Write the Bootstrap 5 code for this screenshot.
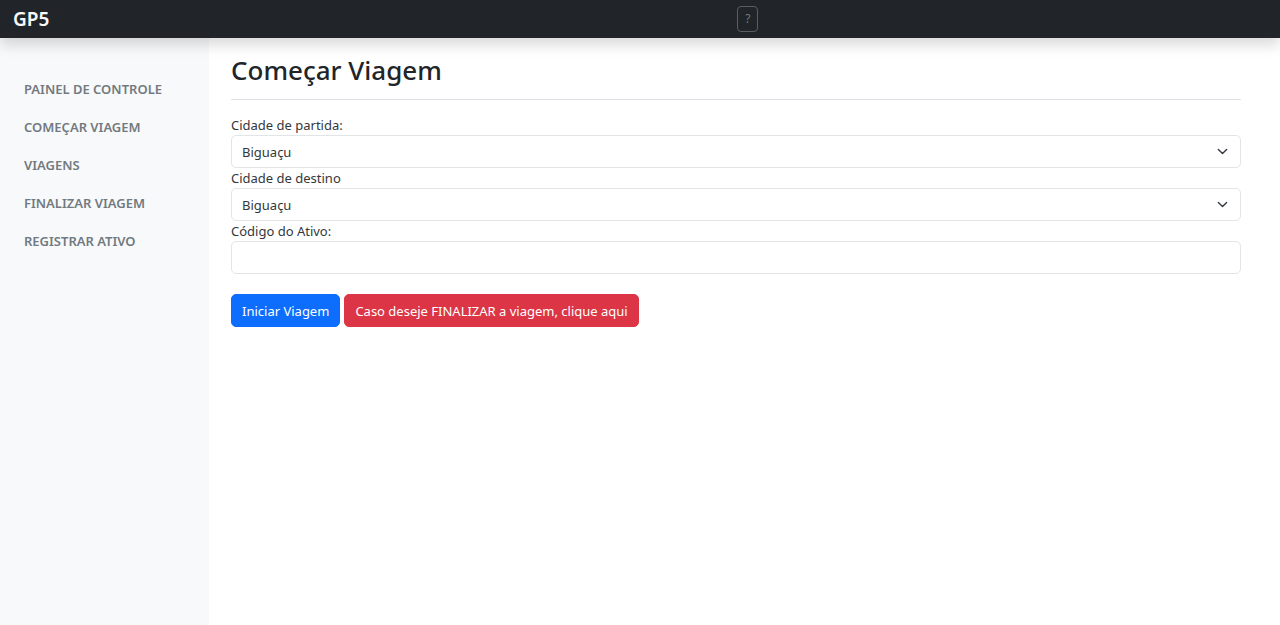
<!DOCTYPE html>
<html lang="pt-br">
<head>
<meta charset="utf-8">
<meta name="viewport" content="width=device-width, initial-scale=1">
<title>GP5 - Começar Viagem</title>
<link href="https://cdn.jsdelivr.net/npm/bootstrap@5.3.0/dist/css/bootstrap.min.css" rel="stylesheet">
<style>
  body { font-family: "Noto Sans", "Open Sans", sans-serif; font-size: 13px; line-height: 20px; }
  .topbar { height: 38px; box-shadow: 0 7px 14px rgba(0, 0, 0, .15); z-index: 10; }
  .brand-cell { width: 57.6%; padding-left: 13px; }
  .topbar .navbar-brand { font-size: 19px; font-weight: 600; line-height: 26px; }
  .help-btn { width: 21px; height: 26px; border: 1px solid #5a5e62; border-radius: 4px; background: transparent; color: #73777b; font-size: 12px; line-height: 24px; }
  .sidebar { flex: 0 0 209px; padding-top: 32px; }
  .sidebar .nav-link { padding: 9px 24px; color: #727980; font-size: 13px; font-weight: 600; line-height: 20px; text-transform: uppercase; }
  .content-area { padding: 16px 39px 16px 22px; }
  h1.page-title { font-size: 26px; font-weight: 500; line-height: 32px; }
  .title-rule { border-bottom: 1px solid #dee2e6; padding-bottom: 13px; margin-bottom: 15px; }
  .form-select, .form-control { height: 33px; padding-top: 6px; padding-bottom: 4px; padding-left: 10px; border-color: #e2e5e8; border-radius: 5px; font-size: 13px; line-height: 21px; }
  .form-select { background-size: 13px 11px; background-position: right 11px center; }
  label, .form-select { color: #33373b; }
  .btn { padding: 6px 10px 4px; border-radius: 5px; font-size: 13px; line-height: 21px; }
</style>
</head>
<body class="d-flex flex-column min-vh-100">
<header class="navbar topbar bg-dark p-0 sticky-top justify-content-start" data-bs-theme="dark">
  <div class="brand-cell"><a class="navbar-brand p-0 m-0" href="#">GP5</a></div>
  <button class="help-btn p-0" type="button">?</button>
</header>
<div class="d-flex flex-grow-1">
  <nav class="sidebar bg-light">
    <ul class="nav flex-column">
      <li class="nav-item"><a class="nav-link" href="#">Painel de controle</a></li>
      <li class="nav-item"><a class="nav-link" href="#">Começar viagem</a></li>
      <li class="nav-item"><a class="nav-link" href="#">Viagens</a></li>
      <li class="nav-item"><a class="nav-link" href="#">Finalizar viagem</a></li>
      <li class="nav-item"><a class="nav-link" href="#">Registrar ativo</a></li>
    </ul>
  </nav>
  <main class="content-area flex-grow-1">
    <div class="title-rule"><h1 class="page-title m-0">Começar Viagem</h1></div>
    <form>
      <label class="d-block" for="partida">Cidade de partida:</label>
      <select class="form-select" id="partida"><option>Biguaçu</option></select>
      <label class="d-block" for="destino">Cidade de destino</label>
      <select class="form-select" id="destino"><option>Biguaçu</option></select>
      <label class="d-block" for="ativo">Código do Ativo:</label>
      <input class="form-control" type="text" id="ativo">
      <div class="d-flex gap-1 mt-3 pt-1">
        <button class="btn btn-primary" type="button">Iniciar Viagem</button>
        <a class="btn btn-danger" href="#">Caso deseje FINALIZAR a viagem, clique aqui</a>
      </div>
    </form>
  </main>
</div>
<script src="https://cdn.jsdelivr.net/npm/bootstrap@5.3.0/dist/js/bootstrap.bundle.min.js"></script>
</body>
</html>
